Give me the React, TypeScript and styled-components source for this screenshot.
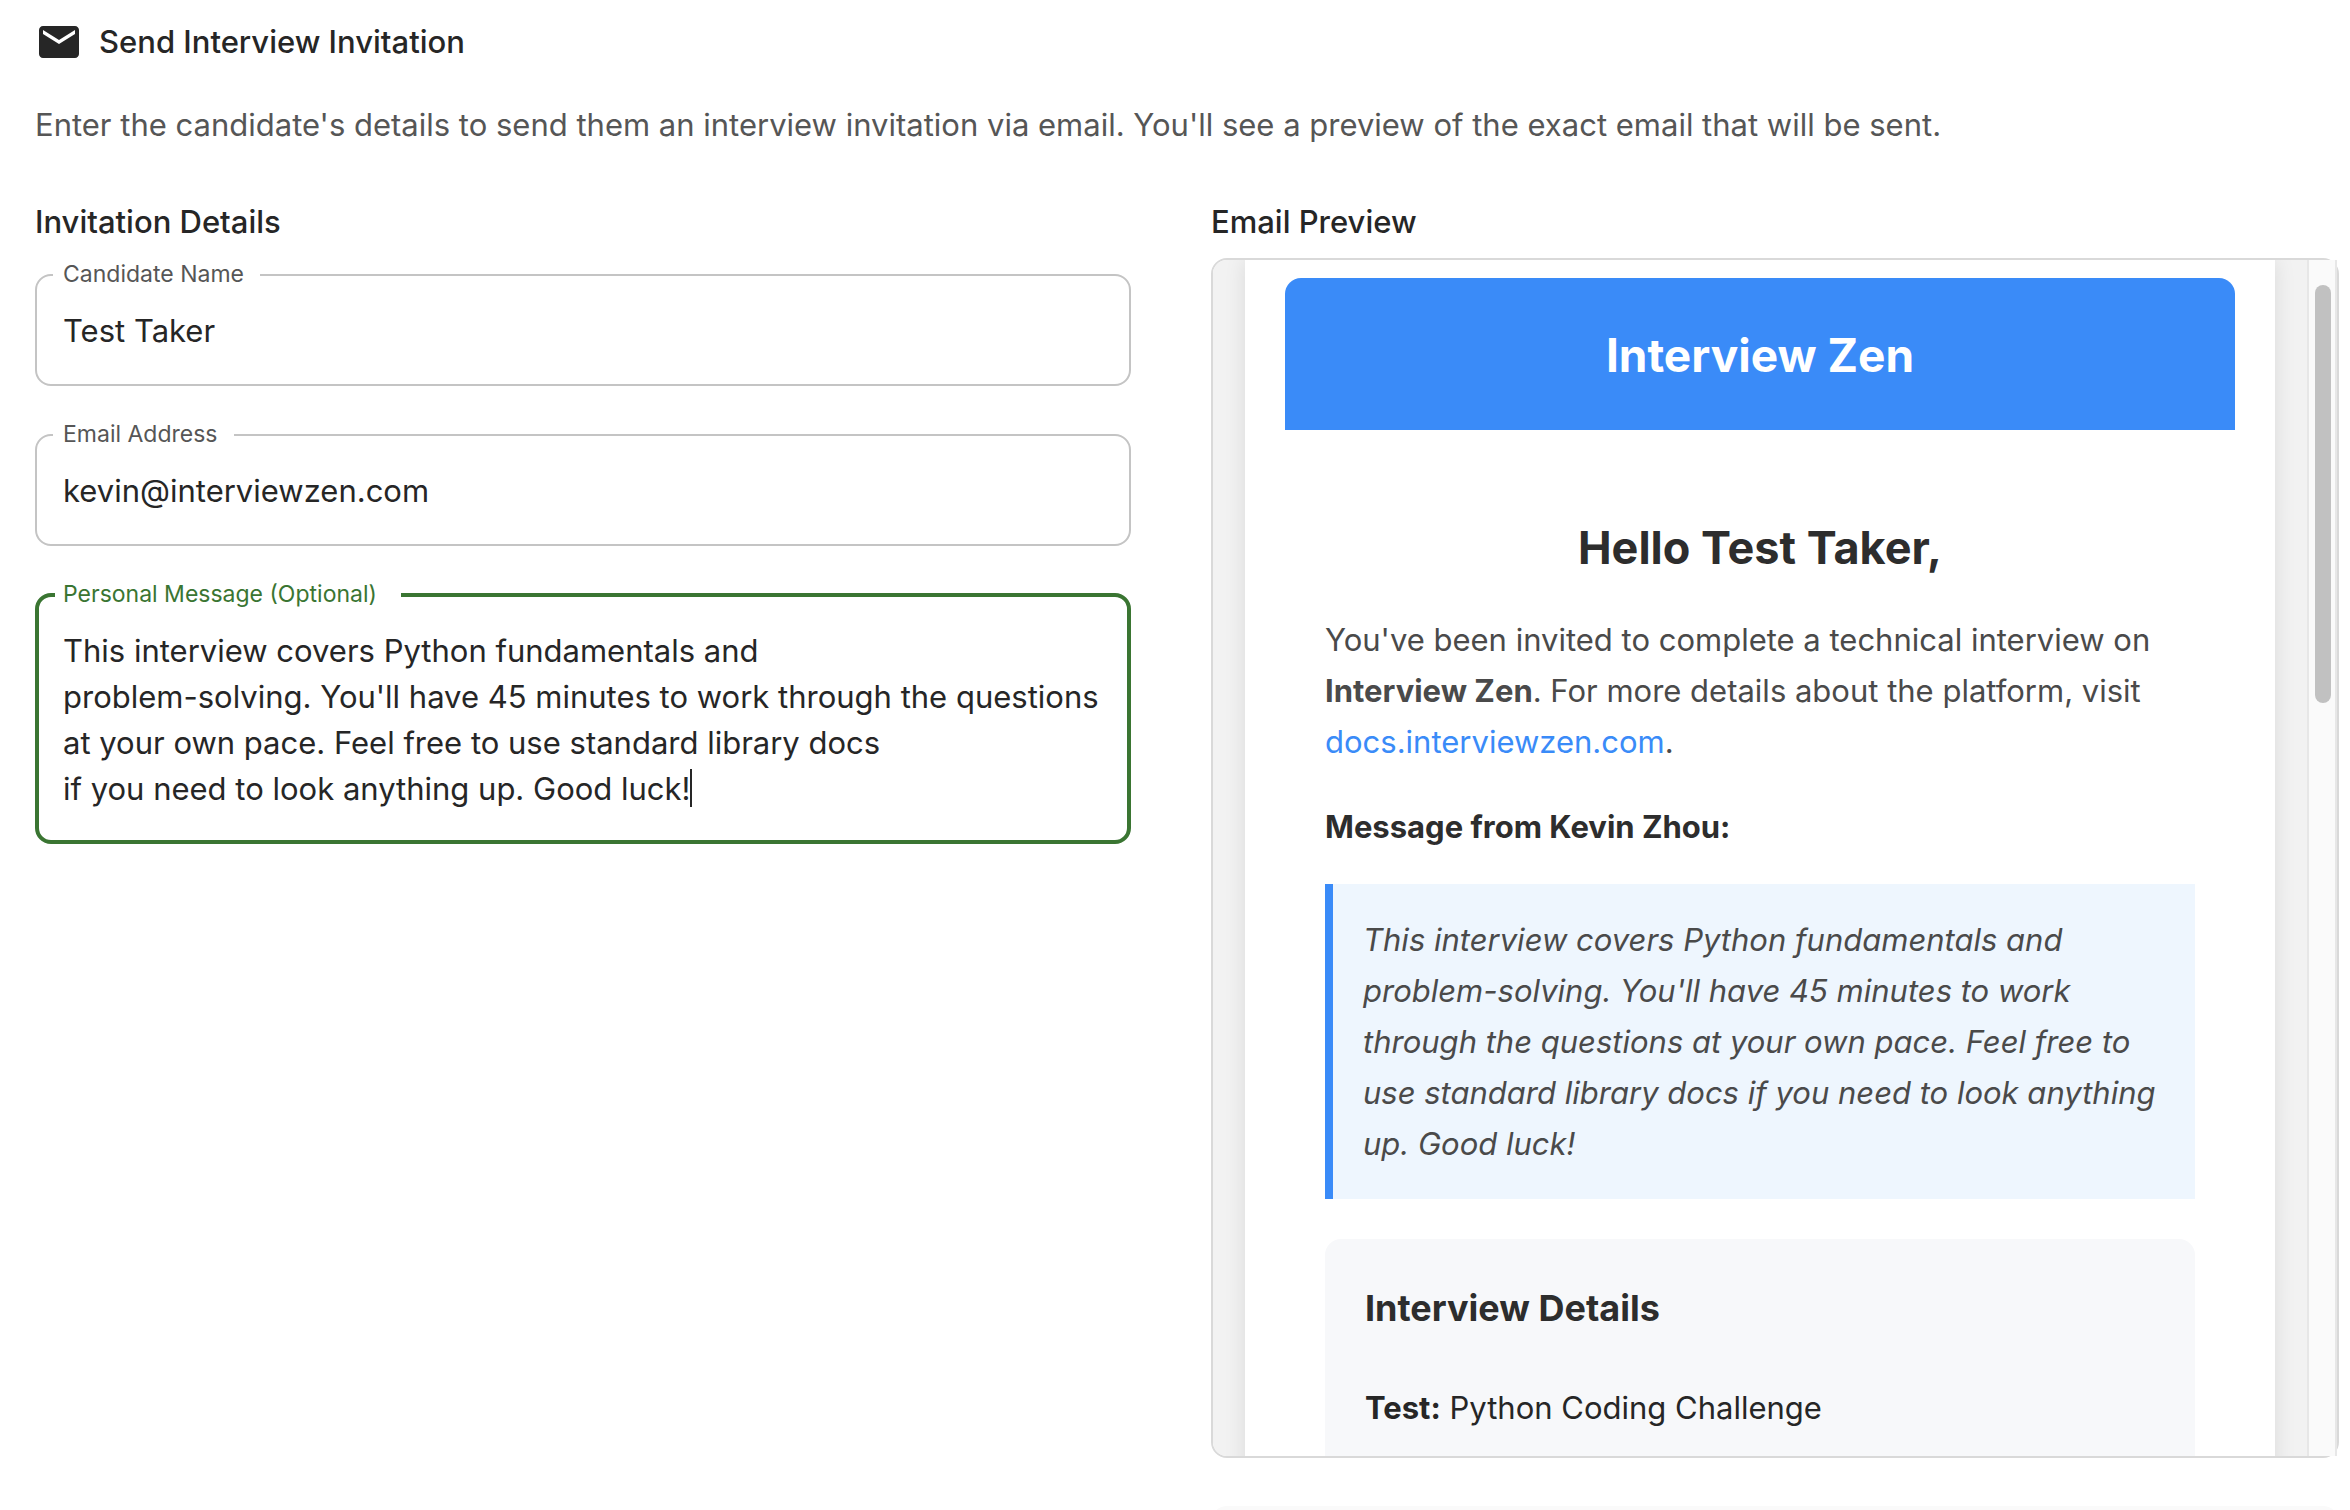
import React, { useLayoutEffect, useRef, useState } from "react";
import styled, { createGlobalStyle } from "styled-components";

const font = '"Inter", "Noto Sans", "Liberation Sans", sans-serif';

const color = {
  text: "#262626",
  muted: "#565656",
  outline: "#c4c4c4",
  focus: "#3a7532",
  brand: "#3a8bf8",
};

const GlobalStyle = createGlobalStyle`
  *, *::before, *::after { box-sizing: border-box; }
  body { margin: 0; background: #fff; color: ${color.text}; font-family: ${font}; }
  h1, h2, h3, h4, p, blockquote { margin: 0; }
`;

const Page = styled.main`
  display: flex;
  flex-direction: column;
  height: 100vh;
  overflow: hidden;
  padding: 18px 11px 0 35px;
`;

const TitleBar = styled.header`
  display: flex;
  align-items: center;
  gap: 16px;
  height: 48px;
`;

const MailIcon = styled.svg`
  width: 48px;
  height: 48px;
  fill: ${color.text};
`;

const Title = styled.h1`
  font-size: 31px;
  font-weight: 500;
  line-height: 48px;
`;

const Intro = styled.p`
  margin-top: 35px;
  font-size: 31px;
  line-height: 48px;
  color: ${color.muted};
`;

const Columns = styled.div`
  display: grid;
  grid-template-columns: minmax(0, 137fr) minmax(0, 141fr);
  gap: 80px;
  margin-top: 49px;
`;

const Column = styled.section`
  display: flex;
  flex-direction: column;
`;

const SectionTitle = styled.h2`
  font-size: 31px;
  font-weight: 500;
  line-height: 48px;
`;

const Form = styled.form`
  display: flex;
  flex-direction: column;
  gap: 33px;
  margin-top: 13px;
`;

const Outline = styled.fieldset<{ $focused?: boolean }>`
  position: relative;
  min-width: 0;
  margin: 0;
  padding: 0;
  border: ${(p) => (p.$focused ? 4 : 2)}px solid ${(p) => (p.$focused ? color.focus : color.outline)};
  border-radius: 16px;
`;

const Notch = styled.legend<{ $focused?: boolean }>`
  margin-left: 16px;
  padding: 0 ${(p) => (p.$focused ? 24 : 16)}px 2px ${(p) => (p.$focused ? 8 : 10)}px;
  font-size: 23px;
  line-height: 30px;
  color: ${(p) => (p.$focused ? color.focus : color.muted)};
`;

const TextBox = styled.input`
  display: block;
  width: 100%;
  padding: 16px 26px 31px;
  border: 0;
  outline: 0;
  background: transparent;
  font-family: ${font};
  font-size: 31px;
  line-height: 46px;
  height: 93px;
  color: ${color.text};
`;

const MessageBox = styled.textarea`
  display: block;
  width: 100%;
  height: 229px;
  padding: 17px 20px 28px 24px;
  border: 0;
  outline: 0;
  resize: none;
  overflow: hidden;
  background: transparent;
  caret-color: transparent;
  font-family: ${font};
  font-size: 31px;
  line-height: 46px;
  color: ${color.text};
`;

const Caret = styled.span`
  position: absolute;
  bottom: 33px;
  width: 2px;
  height: 38px;
  background: ${color.text};
`;

const Frame = styled.div`
  display: flex;
  height: 1200px;
  margin-top: 12px;
  border: 2px solid #d9d9d9;
  border-radius: 16px;
`;

const Viewport = styled.div`
  flex: 1;
  min-width: 0;
  overflow: hidden;
  padding: 0 32px;
  background: #f2f2f2;
  border-radius: 14px 0 0 14px;
`;

const Paper = styled.article`
  padding: 18px 40px 40px;
  background: #fff;
  box-shadow: 0 0 20px rgba(0, 0, 0, 0.1);
`;

const Track = styled.div`
  width: 30px;
  padding: 25px 4px 0 6px;
  background: #fafafa;
  border: solid #e7e7e7;
  border-width: 0 2px;
`;

const Thumb = styled.div`
  width: 16px;
  height: 418px;
  border-radius: 8px;
  background: #c1c1c1;
`;

const Banner = styled.header`
  padding: 39px 40px 37px;
  border-radius: 16px 16px 0 0;
  background: ${color.brand};
  color: #fff;
  font-size: 46px;
  font-weight: 700;
  line-height: 76px;
  text-align: center;
`;

const MailBody = styled.div`
  padding: 80px 40px 40px;
`;

const Greeting = styled.h3`
  color: #2d2d2d;
  font-size: 45px;
  font-weight: 700;
  line-height: 76px;
  text-align: center;
`;

const Paragraph = styled.p`
  margin-top: 28px;
  color: #4a4a4a;
  font-size: 31px;
  line-height: 51px;
`;

const MessageFrom = styled.p`
  margin-top: 34px;
  color: #2d2d2d;
  font-size: 31px;
  font-weight: 700;
  line-height: 51px;
`;

const Link = styled.a`
  color: ${color.brand};
  text-decoration: none;
`;

const Quote = styled.blockquote`
  margin-top: 32px;
  padding: 30px;
  border-left: 8px solid ${color.brand};
  background: #eef6fe;
  color: #4a4a4a;
  font-size: 31px;
  font-style: italic;
  line-height: 51px;
`;

const Card = styled.section`
  margin-top: 40px;
  padding: 40px;
  height: 400px;
  border-radius: 16px;
  background: #f7f8fa;
`;

const CardTitle = styled.h4`
  color: #2d2d2d;
  font-size: 36px;
  font-weight: 700;
  line-height: 58px;
`;

const CardRow = styled.p`
  margin-top: 45px;
  font-size: 31px;
  line-height: 51px;
`;

const NextPanel = styled.div`
  height: 120px;
  margin-top: 48px;
  border-radius: 16px;
  background: #fafafa;
`;

const initialMessage =
  "This interview covers Python fundamentals and\n" +
  "problem-solving. You'll have 45 minutes to work through the questions at your own pace. Feel free to use standard library docs\n" +
  "if you need to look anything up. Good luck!";

function PersonalMessage({ value, onChange }: { value: string; onChange: (v: string) => void }) {
  const box = useRef<HTMLTextAreaElement>(null);
  const [caretX, setCaretX] = useState(0);

  useLayoutEffect(() => {
    const el = box.current;
    const ctx = document.createElement("canvas").getContext("2d");
    if (!el || !ctx) return;
    const style = getComputedStyle(el);
    ctx.font = `${style.fontSize} ${style.fontFamily}`;
    const lastLine = value.split("\n").pop() ?? "";
    setCaretX(parseInt(style.paddingLeft, 10) + Math.round(ctx.measureText(lastLine).width));
  }, [value]);

  return (
    <Outline $focused>
      <Notch $focused>
        <label htmlFor="message">Personal Message (Optional)</label>
      </Notch>
      <MessageBox id="message" ref={box} value={value} onChange={(e) => onChange(e.target.value)} />
      <Caret style={{ left: caretX }} />
    </Outline>
  );
}

export default function App() {
  const [name, setName] = useState("Test Taker");
  const [email, setEmail] = useState("kevin@interviewzen.com");
  const [message, setMessage] = useState(initialMessage);

  return (
    <>
      <GlobalStyle />
      <Page>
        <TitleBar>
          <MailIcon viewBox="0 0 24 24" aria-hidden="true">
            <path d="M20 4H4c-1.1 0-1.99.9-1.99 2L2 18c0 1.1.9 2 2 2h16c1.1 0 2-.9 2-2V6c0-1.1-.9-2-2-2m0 4-8 5-8-5V6l8 5 8-5z" />
          </MailIcon>
          <Title>Send Interview Invitation</Title>
        </TitleBar>
        <Intro>
          Enter the candidate's details to send them an interview invitation via email. You'll see a preview of the
          exact email that will be sent.
        </Intro>
        <Columns>
          <Column>
            <SectionTitle>Invitation Details</SectionTitle>
            <Form>
              <Outline>
                <Notch>
                  <label htmlFor="name">Candidate Name</label>
                </Notch>
                <TextBox id="name" value={name} onChange={(e) => setName(e.target.value)} />
              </Outline>
              <Outline>
                <Notch>
                  <label htmlFor="email">Email Address</label>
                </Notch>
                <TextBox id="email" type="email" value={email} onChange={(e) => setEmail(e.target.value)} />
              </Outline>
              <PersonalMessage value={message} onChange={setMessage} />
            </Form>
          </Column>
          <Column>
            <SectionTitle>Email Preview</SectionTitle>
            <Frame>
              <Viewport>
                <Paper>
                  <Banner>Interview Zen</Banner>
                  <MailBody>
                    <Greeting>Hello {name},</Greeting>
                    <Paragraph>
                      You've been invited to complete a technical interview on <strong>Interview Zen</strong>. For more
                      details about the platform, visit <Link href="#docs">docs.interviewzen.com</Link>.
                    </Paragraph>
                    <MessageFrom>Message from Kevin Zhou:</MessageFrom>
                    <Quote>{message}</Quote>
                    <Card>
                      <CardTitle>Interview Details</CardTitle>
                      <CardRow>
                        <strong>Test:</strong> Python Coding Challenge
                      </CardRow>
                    </Card>
                  </MailBody>
                </Paper>
              </Viewport>
              <Track>
                <Thumb />
              </Track>
            </Frame>
            <NextPanel />
          </Column>
        </Columns>
      </Page>
    </>
  );
}
